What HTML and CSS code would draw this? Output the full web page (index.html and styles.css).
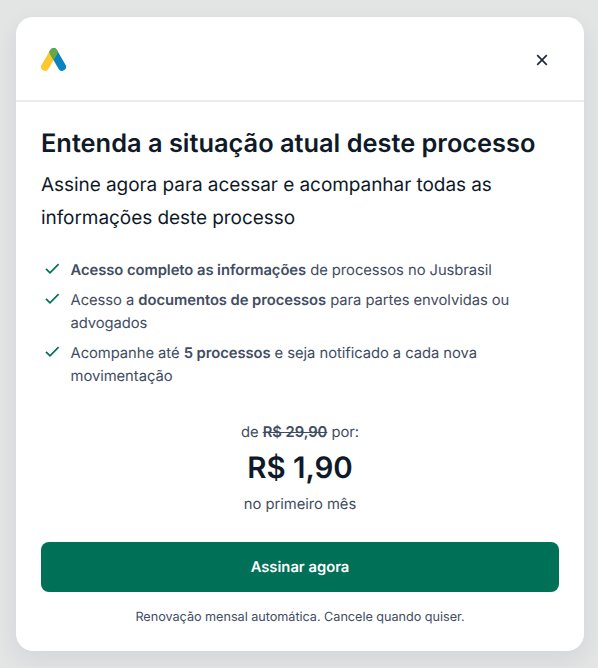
FILE: index.html
```html
<!DOCTYPE html>
<html lang="pt-BR">
<head>
<meta charset="utf-8">
<title>Assinar</title>
<link rel="stylesheet" href="styles.css">
</head>
<body>
<main class="modal">
  <header class="modal-header">
    <svg class="logo" viewBox="0 0 25 23" aria-hidden="true">
      <path d="M12.6 4.2 4.1 18.8" stroke="#fdc72f" stroke-width="8" stroke-linecap="round"/>
      <path d="M12.6 4.2 21 18.8" stroke="#0b83c0" stroke-width="8" stroke-linecap="round"/>
      <path d="M9.1 6.2A4 4 0 1 1 16.1 6.2L12.6 12.2Z" fill="#68a843"/>
    </svg>
    <button class="close" aria-label="Fechar"><svg viewBox="0 0 12 12"><path d="M1.2 1.2l9.6 9.6M10.8 1.2l-9.6 9.6"/></svg></button>
  </header>
  <section class="content">
    <h1>Entenda a situação atual deste processo</h1>
    <p class="lead">Assine agora para acessar e acompanhar todas as informações deste processo</p>
    <ul class="benefits">
      <li><svg viewBox="0 0 15 12"><path d="M1 5.8 5 9.8 13.6 1.2"/></svg><span><b>Acesso completo as informações</b> de processos no Jusbrasil</span></li>
      <li><svg viewBox="0 0 15 12"><path d="M1 5.8 5 9.8 13.6 1.2"/></svg><span>Acesso a <b>documentos de processos</b> para partes envolvidas ou advogados</span></li>
      <li><svg viewBox="0 0 15 12"><path d="M1 5.8 5 9.8 13.6 1.2"/></svg><span>Acompanhe até <b>5 processos</b> e seja notificado a cada nova movimentação</span></li>
    </ul>
    <div class="offer">
      <p>de <s>R$ 29,90</s> por:</p>
      <strong>R$ 1,90</strong>
      <p>no primeiro mês</p>
    </div>
    <button class="subscribe">Assinar agora</button>
    <p class="note">Renovação mensal automática. Cancele quando quiser.</p>
  </section>
</main>
</body>
</html>
```
FILE: styles.css
```css
* { box-sizing: border-box; margin: 0; padding: 0; }
body { height: 668px; padding: 17px 14px 17px 16px; background: #e3e4e4; font-family: Inter, sans-serif; color: #0f1a29; overflow: hidden; text-rendering: geometricPrecision; }
.modal { height: 634px; background: #fff; border-radius: 17px; box-shadow: 0 8px 22px rgba(30, 41, 80, .08); }
.modal-header { height: 85px; padding: 0 36px 0 25px; display: flex; align-items: center; justify-content: space-between; border-bottom: 2px solid #e8ebf1; }
.logo { width: 25px; height: 23px; margin-top: 2px; fill: none; }
.close { width: 12px; height: 12px; border: 0; background: none; display: flex; margin-top: 2px; }
.close svg { width: 12px; height: 12px; stroke: #1e2a3d; stroke-width: 1.7; fill: none; }
.content { padding: 26px 25px 0; }
h1 { font-size: 25.38px; line-height: 32px; font-weight: 600; white-space: nowrap; }
.lead { margin-top: 9px; font-size: 19px; line-height: 32.5px; letter-spacing: -.06px; }
.benefits { margin-top: 25px; list-style: none; display: grid; gap: 8px; color: #3f4d62; font-size: 14.77px; line-height: 22.4px; letter-spacing: -.05px; }
.benefits li { display: flex; gap: 10.5px; padding-left: 4px; }
.benefits svg { width: 15px; height: 12px; flex: none; margin-top: 4px; fill: none; stroke: #007057; stroke-width: 1.7; }
.benefits b { font-weight: 600; }
.offer { margin-top: 34px; text-align: center; color: #3f4d62; font-size: 14.77px; line-height: 23px; letter-spacing: -.04px; }
.offer s { font-weight: 600; }
.offer strong { display: block; font-size: 29.5px; line-height: 49px; font-weight: 600; color: #0f1a29; }
.subscribe { display: block; margin-top: 26px; width: 518px; height: 50px; border: 0; border-radius: 8px; background: #007057; color: #fff; font: 600 14.77px Inter, sans-serif; text-rendering: inherit; }
.note { margin-top: 16px; text-align: center; color: #3f4d62; font-size: 12.66px; line-height: 20px; letter-spacing: -.03px; }
```
